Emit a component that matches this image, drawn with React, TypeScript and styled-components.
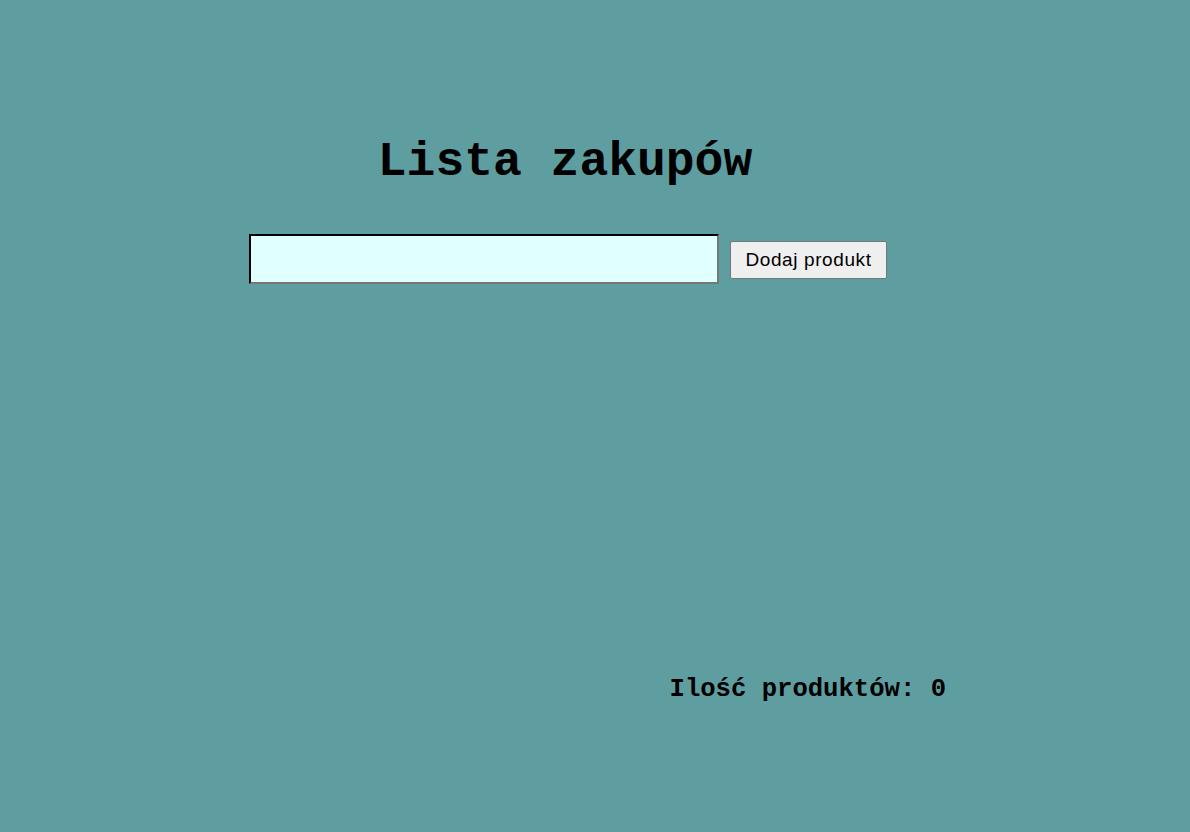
import React, { useState } from "react";
import styled, { createGlobalStyle } from "styled-components";

const Global = createGlobalStyle`
  html, body { margin: 0; padding: 0; }
  body { background: #5f9ea0; font-family: "Liberation Mono", "Courier New", monospace; }
`;

const Page = styled.div`
  width: 756px;
  margin-left: 190px;
  min-height: 832px;
  display: flex;
  flex-direction: column;
`;

const Title = styled.h1`
  margin: 134px 0 0;
  padding-right: 6px;
  font-family: "Liberation Mono", "Courier New", monospace;
  font-weight: bold;
  font-size: 48px;
  line-height: 56px;
  text-align: center;
`;

const Form = styled.div`
  margin-top: 44px;
  display: flex;
  justify-content: center;
  align-items: center;
  gap: 11px;
`;

const Input = styled.input`
  width: 470px;
  height: 50px;
  box-sizing: border-box;
  background: #e0ffff;
  border: 2px inset #767676;
  border-top-color: #1f1f1f;
  border-left-color: #1f1f1f;
  font-size: 18px;
`;

const Button = styled.button`
  height: 38px;
  margin-top: 2px;
  padding: 0 14px;
  font-family: "Liberation Sans", Arial, sans-serif;
  font-size: 19px;
  letter-spacing: 0.6px;
  background: #efefef;
  border: 1px solid #767676;
  border-radius: 2px;
  color: #000;
`;

const List = styled.ul`
  flex: 1;
  margin: 0;
`;

const Footer = styled.p`
  margin: 0 0 128px;
  text-align: right;
  font-family: "Liberation Mono", "Courier New", monospace;
  font-weight: bold;
  font-size: 25.6px;
`;

export default function App() {
  const [items, setItems] = useState<string[]>([]);
  const [value, setValue] = useState("");
  return (
    <>
      <Global />
      <Page>
        <Title>Lista zakupów</Title>
        <Form>
          <Input value={value} onChange={(e) => setValue(e.target.value)} />
          <Button
            onClick={() => {
              if (value.trim()) {
                setItems([...items, value]);
                setValue("");
              }
            }}
          >
            Dodaj produkt
          </Button>
        </Form>
        <List>
          {items.map((it, i) => (
            <li key={i}>{it}</li>
          ))}
        </List>
        <Footer>Ilość produktów: {items.length}</Footer>
      </Page>
    </>
  );
}
